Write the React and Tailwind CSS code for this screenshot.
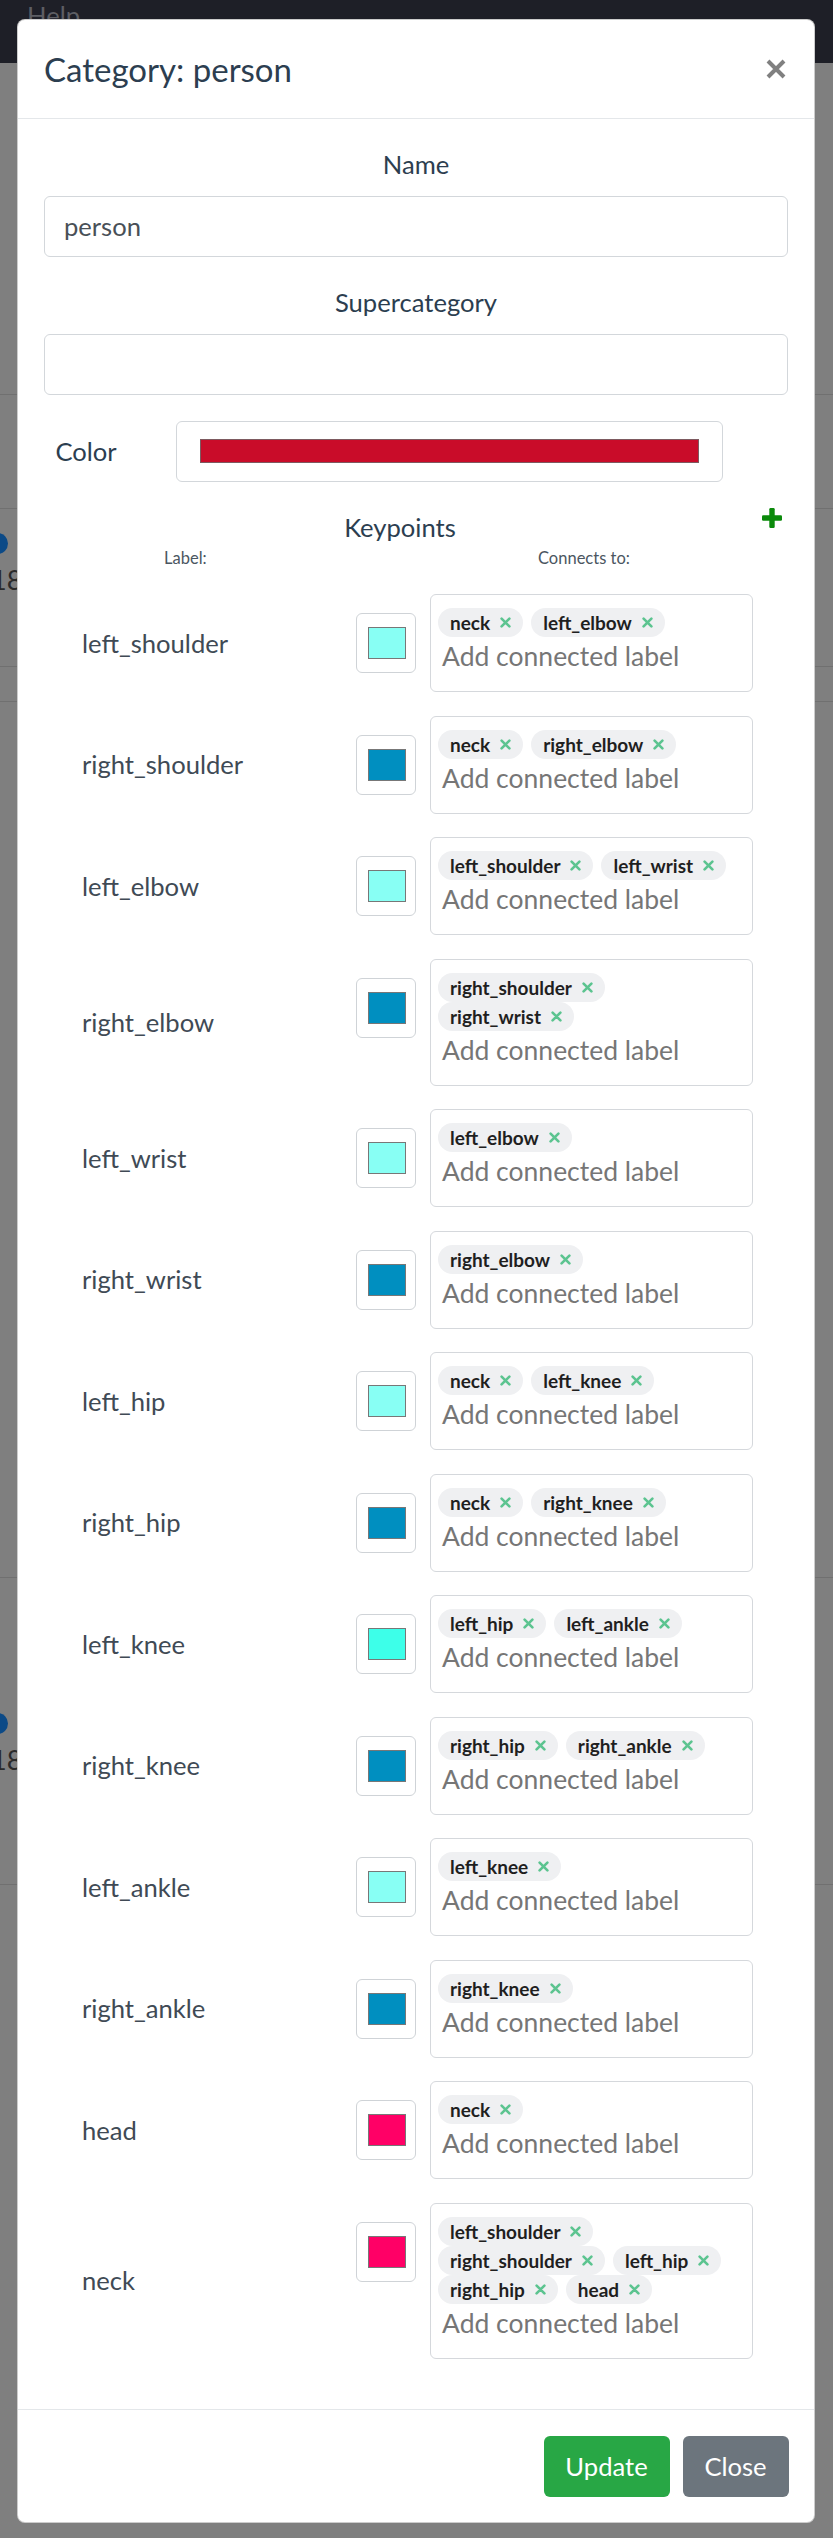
import React from "react";

const ROWS = [
  { name: "left_shoulder", color: "#88fff4", lines: [["neck", "left_elbow"]] },
  { name: "right_shoulder", color: "#008fc0", lines: [["neck", "right_elbow"]] },
  { name: "left_elbow", color: "#88fff4", lines: [["left_shoulder", "left_wrist"]] },
  { name: "right_elbow", color: "#008fc0", lines: [["right_shoulder"], ["right_wrist"]] },
  { name: "left_wrist", color: "#88fff4", lines: [["left_elbow"]] },
  { name: "right_wrist", color: "#008fc0", lines: [["right_elbow"]] },
  { name: "left_hip", color: "#88fff4", lines: [["neck", "left_knee"]] },
  { name: "right_hip", color: "#008fc0", lines: [["neck", "right_knee"]] },
  { name: "left_knee", color: "#3dffe9", lines: [["left_hip", "left_ankle"]] },
  { name: "right_knee", color: "#008fc0", lines: [["right_hip", "right_ankle"]] },
  { name: "left_ankle", color: "#88fff4", lines: [["left_knee"]] },
  { name: "right_ankle", color: "#008fc0", lines: [["right_knee"]] },
  { name: "head", color: "#ff0066", lines: [["neck"]] },
  {
    name: "neck",
    color: "#ff0066",
    lines: [["left_shoulder"], ["right_shoulder", "left_hip"], ["right_hip", "head"]],
  },
];

function Tag({ text }) {
  return (
    <span className="flex items-center h-[29px] rounded-full bg-[#eff0f2] pl-[12px] pr-[12px] text-[19px] font-bold text-[#1f1f1f] leading-none">
      {text}
      <svg className="ml-[10px]" width="11" height="11" viewBox="0 0 11 11">
        <path
          d="M1.6 1.6L9.4 9.4M9.4 1.6L1.6 9.4"
          stroke="#5cc490"
          strokeWidth="2.6"
          strokeLinecap="round"
        />
      </svg>
    </span>
  );
}

function KeypointRow({ row }) {
  return (
    <div className="flex items-start">
      <div className="w-[312px] self-stretch flex items-center pl-[38px] text-[25.6px] text-[#404a55]">
        {row.name}
      </div>
      <div className="mt-[19px] w-[60px] h-[60px] border border-[#cfd3d7] rounded-[6px] bg-white pt-[13px] pl-[11px]">
        <div
          className="w-[38px] h-[32px] border border-[#777777]"
          style={{ backgroundColor: row.color }}
        />
      </div>
      <div className="ml-[14px] w-[323px] border border-[#d5d8dc] rounded-[6px] pt-[13px] pb-[14px] pl-[7px] pr-[7px]">
        {row.lines.map((line, i) => (
          <div key={i} className="flex gap-[8px] h-[29px]">
            {line.map((t) => (
              <Tag key={t} text={t} />
            ))}
          </div>
        ))}
        <div className="h-[40px] flex items-center pl-[4px] text-[26.5px] text-[#767676]">
          Add connected label
        </div>
      </div>
    </div>
  );
}

export default function App() {
  return (
    <div className="relative w-[833px] h-[2538px] overflow-hidden bg-[#7f7f7f] font-[Lato,'Noto_Sans',sans-serif]">
      {/* page beneath the backdrop */}
      <div className="h-[63px] bg-[#1e1f27] pl-[27px] pt-[3px] text-[25.6px] leading-none text-[#5d5e64]">
        Help
      </div>
      <div className="absolute left-0 top-[394px] w-full h-px bg-[#707070]" />
      <div className="absolute left-0 top-[508px] w-full h-px bg-[#707070]" />
      <div className="absolute left-0 top-[666px] w-full h-px bg-[#707070]" />
      <div className="absolute left-0 top-[701px] w-full h-px bg-[#707070]" />
      <div className="absolute left-[-13px] top-[533px] w-[21px] h-[21px] rounded-full bg-[#0c4a87]" />
      <div className="absolute left-[-9px] top-[566px] text-[27px] leading-none text-[#2a2a2a]">18</div>
      <div className="absolute left-0 top-[1577px] w-full h-px bg-[#707070]" />
      <div className="absolute left-[-13px] top-[1713px] w-[21px] h-[21px] rounded-full bg-[#0c4a87]" />
      <div className="absolute left-[-9px] top-[1746px] text-[27px] leading-none text-[#2a2a2a]">18</div>
      <div className="absolute left-0 top-[1884px] w-full h-px bg-[#707070]" />

      {/* modal */}
      <div className="absolute left-[17px] top-[19px] w-[798px] bg-white border border-black/20 rounded-[8px] text-[#2c3e50]">
        <div className="h-[99px] flex items-center justify-between border-b border-[#e4e7ea] pl-[26px] pr-[28px]">
          <div className="text-[33px] leading-none">Category: person</div>
          <svg width="20" height="20" viewBox="0 0 20 20">
            <path d="M2 2L18 18M18 2L2 18" stroke="#808080" strokeWidth="4" />
          </svg>
        </div>

        <div className="pt-[26px] pb-[26px] px-[26px]">
          <div className="h-[38px] leading-[38px] text-center text-[25.6px] mb-[13px]">Name</div>
          <div className="h-[61px] border border-[#d3d7db] rounded-[6px] flex items-center pl-[19px] text-[25.6px] text-[#495057] mb-[26px]">
            person
          </div>
          <div className="h-[38px] leading-[38px] text-center text-[25.6px] mb-[13px]">Supercategory</div>
          <div className="h-[61px] border border-[#d3d7db] rounded-[6px] mb-[26px]" />

          <div className="flex h-[61px] mb-[26px]">
            <div className="ml-[-24px] w-[132px] flex items-center justify-center text-[25.6px]">Color</div>
            <div className="ml-[24px] w-[547px] h-[61px] border border-[#d3d7db] rounded-[6px] pt-[17px] pl-[23px]">
              <div className="w-[499px] h-[24px] bg-[#c90c29] border border-[#7d5a60]" />
            </div>
          </div>

          <div className="flex h-[38px]">
            <div className="flex-1 text-center leading-[38px] text-[25.6px]">Keypoints</div>
            <div className="w-[32px] pl-[6px] pt-0">
              <svg width="20" height="20" viewBox="0 0 20 20">
                <rect x="7.3" y="0" width="5.4" height="20" rx="1.2" fill="#0b8a0b" />
                <rect x="0" y="7.3" width="20" height="5.4" rx="1.2" fill="#0b8a0b" />
              </svg>
            </div>
          </div>

          <div className="flex h-[24px] items-center text-[16.5px] text-[#4b5661]">
            <div className="w-[494px] pl-[120px]">Label:</div>
            <div>Connects to:</div>
          </div>

          <div className="flex flex-col gap-[23.5px] pt-[24px] pb-[24.5px]">
            {ROWS.map((r) => (
              <KeypointRow key={r.name} row={r} />
            ))}
          </div>
        </div>

        <div className="border-t border-[#e4e7ea] flex justify-end gap-[13px] pt-[25.5px] pb-[25.5px] pr-[25.5px]">
          <div className="w-[126px] h-[61px] rounded-[6px] bg-[#28a745] text-white text-[25.6px] flex items-center justify-center">
            Update
          </div>
          <div className="w-[106px] h-[61px] rounded-[6px] bg-[#6c757d] text-white text-[25.6px] flex items-center justify-center">
            Close
          </div>
        </div>
      </div>
    </div>
  );
}
